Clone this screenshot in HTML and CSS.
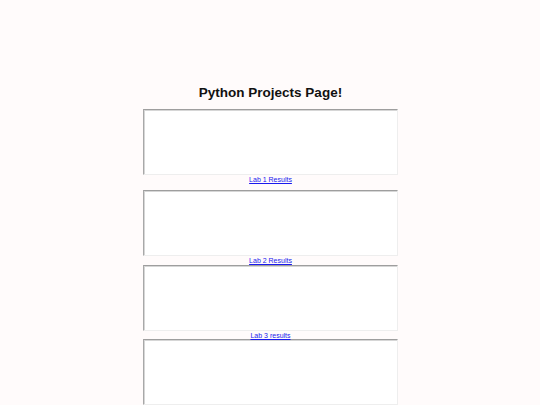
FILE: index.html
```html
<!DOCTYPE html>
<html lang="en">
<head>
<meta charset="UTF-8" />
<meta name="viewport" content="width=device-width, initial-scale=1" />
<title>Python Projects Page!</title>
<link rel="stylesheet" href="styles.css">
</head>
<body>
  <main class="projects">
    <h1>Python Projects Page!</h1>

    <div class="frame"></div>
    <a class="lab-link lab-link--spaced" href="#lab1">Lab 1 Results</a>

    <div class="frame"></div>
    <a class="lab-link" href="#lab2">Lab 2 Results</a>

    <div class="frame"></div>
    <a class="lab-link lab-link--tight" href="#lab3">Lab 3 results</a>

    <div class="frame"></div>
  </main>
</body>
</html>
```

FILE: styles.css
```css
* {
  box-sizing: border-box;
}
body {
  background: #fffbfb;
  font-family: 'Liberation Sans', Arial, sans-serif;
  margin: 0;
  padding: 0;
}
.projects {
  display: flex;
  flex-direction: column;
  align-items: center;
  padding-top: 85px;
  padding-left: 1px;
}
.projects h1 {
  font-size: 13.5px;
  line-height: 16px;
  font-weight: 700;
  color: #111;
  margin: 0 0 8px;
}
/* empty embedded result panes */
.frame {
  width: 255px;
  height: 66px;
  flex-shrink: 0;
  background: #fff;
  border: 1px solid;
  border-color: #9e9e9e #eeeeee #eeeeee #a8a8a8;
  box-shadow: inset 1px 1px 0 #d6d6d6;
}
.lab-link {
  font-size: 7px;
  line-height: 8px;
  padding-top: 1px;
  color: #1a1aee;
  z-index: 1;
}
.lab-link--spaced {
  margin-bottom: 6px;
}
.lab-link--tight {
  line-height: 7px;
}
```
